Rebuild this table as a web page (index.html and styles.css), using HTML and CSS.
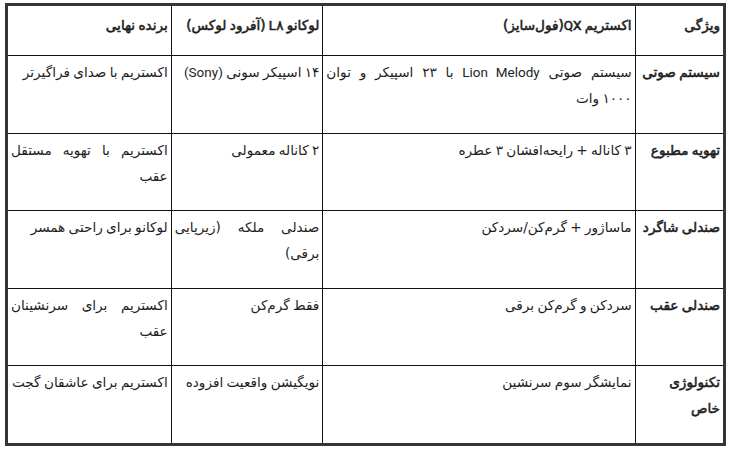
FILE: index.html
```html
<!DOCTYPE html>
<html lang="fa" dir="rtl">
<head>
<meta charset="utf-8">
<link rel="stylesheet" href="styles.css">
</head>
<body>
<table class="cmp">
  <colgroup>
    <col class="c-feat">
    <col class="c-qx">
    <col class="c-l8">
    <col class="c-win">
  </colgroup>
  <thead>
    <tr class="head-row">
      <th>ویژگی</th>
      <th>اکستریم <span class="lat">QX</span>(فول‌سایز)</th>
      <th>لوکانو <span class="lat">L</span>۸ (آفرود لوکس)</th>
      <th>برنده نهایی</th>
    </tr>
  </thead>
  <tbody>
    <tr>
      <th>سیستم صوتی</th>
      <td>سیستم صوتی <span class="lat">Lion Melody</span> با ۲۳ اسپیکر و توان ۱۰۰۰&nbsp;وات</td>
      <td>۱۴ اسپیکر سونی <span class="lat">(Sony)</span></td>
      <td>اکستریم با صدای فراگیرتر</td>
    </tr>
    <tr>
      <th>تهویه مطبوع</th>
      <td>۳ کاناله + رایحه‌افشان ۳ عطره</td>
      <td>۲ کاناله معمولی</td>
      <td>اکستریم با تهویه مستقل عقب</td>
    </tr>
    <tr>
      <th>صندلی شاگرد</th>
      <td>ماساژور + گرم‌کن/سردکن</td>
      <td>صندلی ملکه (زیرپایی برقی)</td>
      <td>لوکانو برای راحتی همسر</td>
    </tr>
    <tr>
      <th>صندلی عقب</th>
      <td>سردکن و گرم‌کن برقی</td>
      <td>فقط گرم‌کن</td>
      <td>اکستریم برای سرنشینان عقب</td>
    </tr>
    <tr>
      <th>تکنولوژی خاص</th>
      <td>نمایشگر سوم سرنشین</td>
      <td>نویگیشن واقعیت افزوده</td>
      <td>اکستریم برای عاشقان گجت</td>
    </tr>
  </tbody>
</table>
</body>
</html>
```

FILE: styles.css
```css
html, body {
  margin: 0;
  padding: 0;
  background: #ffffff;
}
body {
  padding: 3px 3px 0 5px;
  font-family: "DejaVu Sans", sans-serif;
  font-size: 13.6px;
  word-spacing: -1px;
  color: #1e1e1e;
}
.cmp {
  border-collapse: collapse;
  border: 3px solid #353535;
  width: 721px;
  table-layout: fixed;
}
.c-feat { width: 89px; }
.c-qx { width: 311px; }
.c-l8 { width: 151px; }
.c-win { width: 164px; }

.cmp th,
.cmp td {
  border: 1px solid #111111;
  padding: 3px 3px 4px 3px;
  vertical-align: top;
  text-align: justify;
  line-height: 26px;
  font-weight: normal;
  height: 69.6px;
}
.cmp th {
  text-align: right;
  -webkit-text-stroke: 0.55px currentColor;
}
.lat {
  font-family: Roboto, "Liberation Sans", sans-serif;
  font-size: 13.5px;
}
.cmp .head-row th {
  padding-top: 6px;
  height: 39px;
}
```
